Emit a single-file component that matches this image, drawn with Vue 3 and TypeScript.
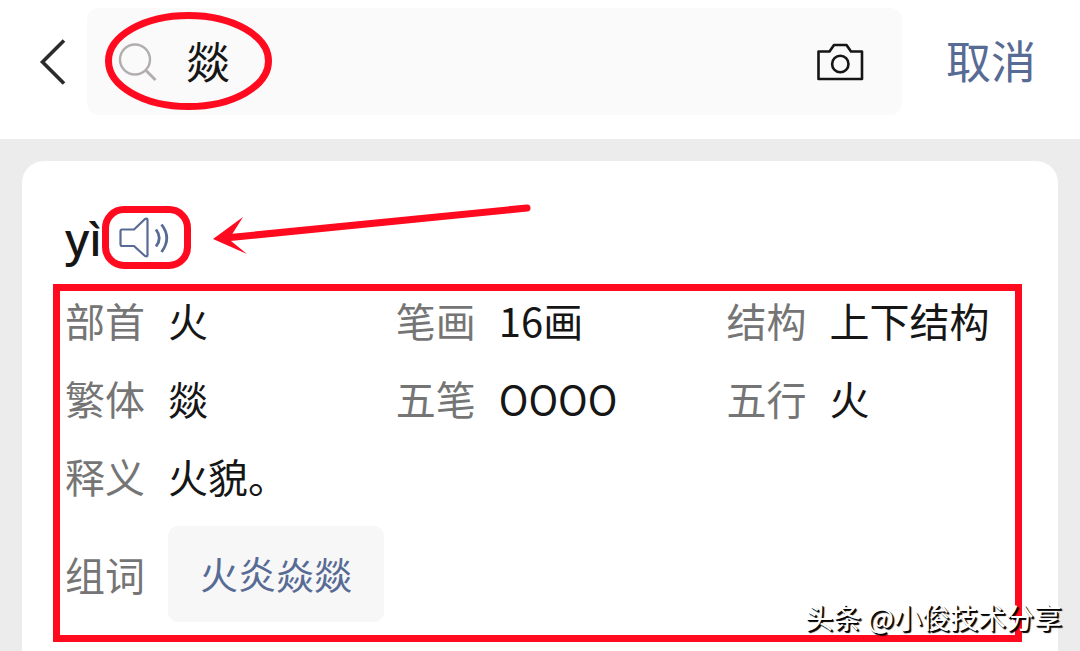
<script setup lang="ts">
import { ref } from 'vue'

interface Entry {
  label: string
  value: string
  wide?: boolean
}

const query = ref('燚')

const entries: Entry[] = [
  { label: '部首', value: '火' },
  { label: '笔画', value: '16画' },
  { label: '结构', value: '上下结构' },
  { label: '繁体', value: '燚' },
  { label: '五笔', value: 'OOOO' },
  { label: '五行', value: '火' },
  { label: '释义', value: '火貌。', wide: true },
]

const words: string[] = ['火炎焱燚']
</script>

<template>
  <div class="page">
    <header class="bar">
      <button class="back" type="button" aria-label="返回">
        <svg width="28" height="48" viewBox="0 0 28 48" aria-hidden="true">
          <path d="M26 2.500 4.500 24 26 45.500" fill="none" stroke="#2b2b2b" stroke-width="3.600" />
        </svg>
      </button>

      <form class="search" role="search" @submit.prevent>
        <svg class="lens" width="40" height="40" viewBox="0 0 40 40" aria-hidden="true">
          <g fill="none" stroke="#b3aeae" stroke-width="2.400">
            <circle cx="17" cy="17.500" r="15" />
            <path d="M27.500 28 37.500 38" stroke-width="3" />
          </g>
        </svg>
        <input v-model="query" class="field" type="text" aria-label="搜索" />
        <button class="camera" type="button" aria-label="拍照搜索">
          <svg width="48" height="40" viewBox="0 0 48 40" aria-hidden="true">
            <g fill="none" stroke="#151515" stroke-width="2.600" stroke-linejoin="round">
              <path d="M2.500 9.500H13.500L18 3H30.500L35 9.500H46V37H2.500Z" />
              <circle cx="24.300" cy="22" r="8.200" />
            </g>
          </svg>
        </button>
        <svg class="ring" width="168" height="100" viewBox="0 0 168 100" aria-hidden="true">
          <ellipse cx="83.500" cy="50" rx="80" ry="45.500" fill="none" stroke="#ff0a1e" stroke-width="7" />
        </svg>
      </form>

      <button class="cancel" type="button">取消</button>
    </header>

    <main class="card">
      <div class="reading">
        <h1 class="pinyin">yì</h1>
        <button class="sound" type="button" aria-label="播放读音">
          <svg width="54" height="42" viewBox="0 0 54 42" aria-hidden="true">
            <g fill="none" stroke="#576b95" stroke-width="2.200" stroke-linejoin="round">
              <path d="M5 12.500H17L28 2Q30.500 1 30.500 3V38Q30.500 40 28 39L17 29H5Q3.500 29 3.500 27V14.500Q3.500 12.500 5 12.500Z" />
              <path d="M39 12.500Q45.500 21 39 29.500" stroke-width="2.800" />
              <path d="M44.500 7.500Q55 21 44.500 35" stroke-width="2.800" />
            </g>
          </svg>
        </button>
        <svg class="arrow" width="320" height="54" viewBox="0 0 320 54" aria-hidden="true">
          <path d="M17 35.500 314 6" stroke="#ff0a1e" stroke-width="7" stroke-linecap="round" />
          <path d="M0 37 30 15 18 34V39L34 52Z" fill="#ff0a1e" />
        </svg>
      </div>

      <section class="details">
        <dl class="facts">
          <div v-for="entry in entries" :key="entry.label" class="fact" :class="{ wide: entry.wide }">
            <dt>{{ entry.label }}</dt>
            <dd>{{ entry.value }}</dd>
          </div>
          <div class="fact wide">
            <dt>组词</dt>
            <dd>
              <a v-for="word in words" :key="word" class="word" href="#">{{ word }}</a>
            </dd>
          </div>
        </dl>
      </section>
    </main>

    <p class="credit">头条 @小俊技术分享</p>
  </div>
</template>

<style>
body {
  margin: 0;
}
</style>

<style scoped>
.page {
  position: relative;
  display: flex;
  flex-direction: column;
  box-sizing: border-box;
  min-height: 100vh;
  background: #ececec;
  color: #161616;
  font-family: "Noto Sans CJK SC", "Noto Sans", sans-serif;
}

button {
  margin: 0;
  padding: 0;
  border: 0;
  background: none;
  font: inherit;
  cursor: pointer;
}

svg {
  display: block;
}

.bar {
  display: flex;
  align-items: center;
  padding: 8px 44px 24px 38px;
  background: #fff;
}

.back {
  width: 49px;
}

.search {
  position: relative;
  display: flex;
  flex: 1;
  align-items: center;
  box-sizing: border-box;
  min-width: 0;
  height: 107px;
  padding: 0 38px 0 31px;
  border-radius: 12px;
  background: #fafafa;
}

.lens {
  flex: none;
}

.field {
  flex: 1;
  min-width: 0;
  height: 64px;
  margin-left: 28px;
  padding: 0 0 4px;
  border: 0;
  outline: 0;
  background: none;
  color: #161616;
  font: inherit;
  font-size: 44px;
}

.ring {
  position: absolute;
  top: 3px;
  left: 18px;
  pointer-events: none;
}

.cancel {
  padding-bottom: 4px;
  margin-left: 44px;
  color: #576b95;
  font-size: 45px;
  line-height: 64px;
}

.card {
  flex: 1;
  margin: 22px 22px 0;
  padding: 45px 36px 9px 31px;
  border-radius: 22px 22px 0 0;
  background: #fff;
}

.reading {
  position: relative;
  display: flex;
  align-items: center;
  height: 63px;
  margin-bottom: 15px;
  padding-left: 12px;
}

.pinyin {
  width: 37px;
  margin: 0;
  font-family: "Noto Sans", sans-serif;
  font-size: 46px;
  font-weight: 500;
  line-height: 64px;
}

.sound {
  display: flex;
  align-items: center;
  justify-content: center;
  box-sizing: border-box;
  width: 89px;
  height: 63px;
  padding-right: 5px;
  border: 7px solid #ff0a1e;
  border-radius: 22px;
}

.arrow {
  position: absolute;
  top: -4px;
  left: 160px;
  pointer-events: none;
}

.details {
  padding: 1px 5px 13px;
  border: 7px solid #ff0a1e;
}

.facts {
  display: grid;
  grid-template-columns: 35fr 35fr 30fr;
  row-gap: 22px;
  margin: 0;
  font-size: 40px;
  line-height: 56px;
}

.fact {
  display: flex;
  align-items: center;
  gap: 23px;
  white-space: nowrap;
}

.wide {
  grid-column: 1 / -1;
}

dt {
  color: #757575;
}

dd {
  margin: 0;
}

.word {
  display: block;
  padding: 19px 32px 21px;
  border-radius: 10px;
  background: #f7f7f7;
  color: #576b95;
  font-size: 38px;
  text-decoration: none;
}

.credit {
  position: absolute;
  right: 18px;
  bottom: 14px;
  margin: 0;
  color: #fff;
  font-size: 28px;
  line-height: 40px;
  text-shadow: 1px 1px 0 #000, 2px 2px 1px #000;
}
</style>
